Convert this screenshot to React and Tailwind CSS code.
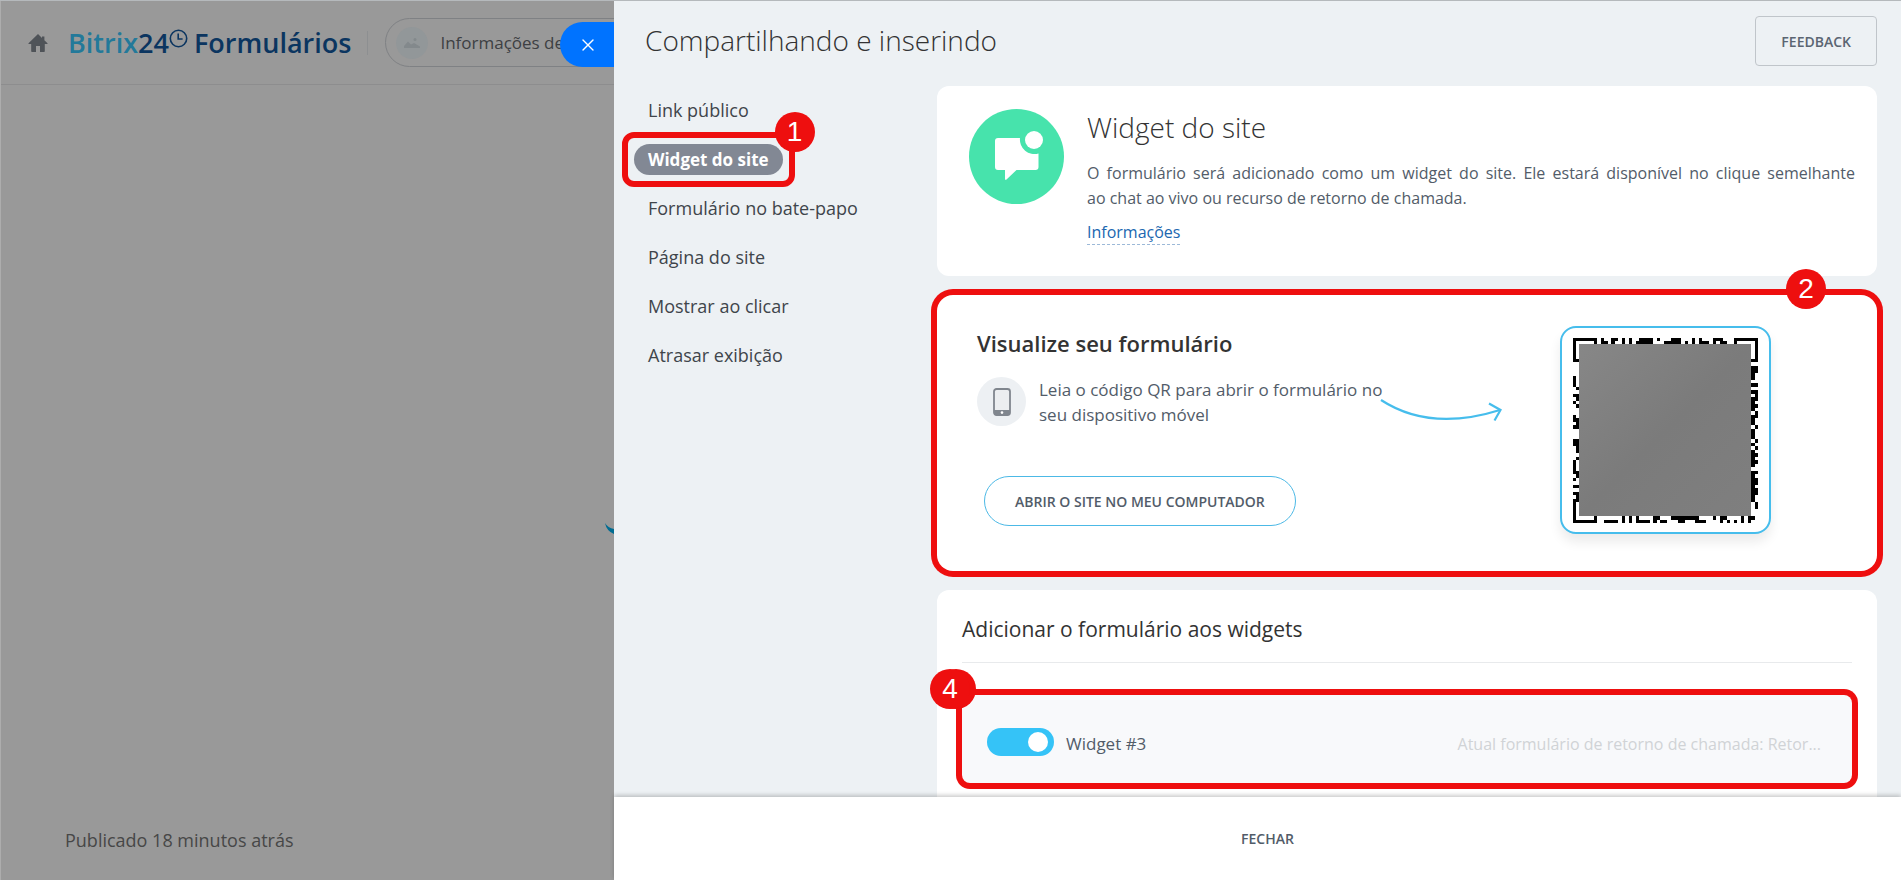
import React, { useState } from 'react';
import { X } from 'lucide-react';

const menuItems = [
  { id: 'link', label: 'Link público' },
  { id: 'widget', label: 'Widget do site', step: '1' },
  { id: 'chat', label: 'Formulário no bate-papo' },
  { id: 'page', label: 'Página do site' },
  { id: 'click', label: 'Mostrar ao clicar' },
  { id: 'delay', label: 'Atrasar exibição' },
];

// Visible edge modules of the 53x53 code, the middle is covered
const qrTop = [
  '11111110100110101001111010001110001010001110001111111',
  '10000010110100101011111000111110101011101011001000001',
];
const qrBottom = [
  '10000010000000101010000110001111111100001011000010110',
  '11111110011110101011110101100011000111000010101010100',
];
const qrLeft = [
  '11111110000111001010001101000110000111101010101111111',
  '10000010000000101101000111000111101000110010111000001',
];
const qrRight = [
  '00000010111101010111101110111010111110111111111000000',
  '11111110110001011101011001000101010100101101100110000',
];

function QrCode() {
  const cells = [];
  const add = (line, place) => {
    line.split('').forEach((bit, i) => {
      if (bit === '1') cells.push(place(i));
    });
  };
  add(qrTop[0], (i) => [i, 0]);
  add(qrTop[1], (i) => [i, 1]);
  add(qrBottom[0], (i) => [i, 51]);
  add(qrBottom[1], (i) => [i, 52]);
  add(qrLeft[0].slice(2, 51), (i) => [0, i + 2]);
  add(qrLeft[1].slice(2, 51), (i) => [1, i + 2]);
  add(qrRight[0].slice(2, 51), (i) => [51, i + 2]);
  add(qrRight[1].slice(2, 51), (i) => [52, i + 2]);

  return (
    <svg viewBox="0 0 53 53" className="w-[185px] h-[185px]" shapeRendering="crispEdges" role="img" aria-label="QR">
      <defs>
        <linearGradient id="qr-cover" x1="0" y1="0" x2="1" y2="1">
          <stop offset="0" stopColor="#878787" />
          <stop offset="0.5" stopColor="#7b7b7b" />
          <stop offset="1" stopColor="#7f7f7f" />
        </linearGradient>
      </defs>
      {cells.map(([x, y]) => (
        <rect key={`${x}-${y}`} x={x} y={y} width="1" height="1" fill="#000" />
      ))}
      <rect x="1.8" y="1.8" width="49.3" height="49.2" fill="url(#qr-cover)" />
    </svg>
  );
}

function StepBadge({ children, className }) {
  return (
    <span
      className={`absolute z-10 flex items-center justify-center w-10 h-10 rounded-full bg-[#ee0f0f] text-white text-[28px] leading-none font-normal font-['Liberation_Sans',sans-serif] ${className}`}
    >
      {children}
    </span>
  );
}

function HomeIcon() {
  return (
    <svg viewBox="0 0 20 20" className="w-5 h-5 shrink-0" fill="#4f5358">
      <path d="M10 1 L0.5 10.2 V11 H3.2 V18.2 Q3.2 19 4 19 H8 V13 H12 V19 H16 Q16.8 19 16.8 18.2 V11 H19.5 V10.2 L16.4 7.2 V3.4 H14 V4.9 Z" />
    </svg>
  );
}

function ClockIcon() {
  return (
    <svg viewBox="0 0 19 19" className="w-[19px] h-[19px] mt-[6px] self-start" fill="none" stroke="#0b3560" strokeWidth="1.6">
      <circle cx="9.5" cy="9.5" r="8.2" />
      <path d="M9.2 4.6 V10 H13.6" />
    </svg>
  );
}

function ChatWidgetIcon() {
  return (
    <svg viewBox="0 0 95 95" className="w-[95px] h-[95px] shrink-0">
      <circle cx="47.5" cy="47.5" r="47.5" fill="#47e3ac" />
      <path
        fill="#fff"
        d="M29 29 H51 A14.5 14.5 0 0 0 69.5 44.5 V58 Q69.5 61 66.5 61 H47.5 L37.5 70.5 Q36 71.6 36 69.5 V61 H29 Q26 61 26 58 V32 Q26 29 29 29 Z"
      />
      <circle cx="65" cy="31" r="9" fill="#fff" />
    </svg>
  );
}

function PhoneIcon() {
  return (
    <span className="flex items-center justify-center w-[49px] h-[49px] rounded-full bg-[#edf0f3] shrink-0">
      <svg viewBox="0 0 18 28" className="w-[18px] h-7">
        <rect x="1" y="1" width="16" height="26" rx="2.5" fill="#eceef0" stroke="#80868e" strokeWidth="1.8" />
        <path d="M1 22 H17 V25 Q17 27 15 27 H3 Q1 27 1 25 Z" fill="#80868e" />
        <circle cx="9" cy="24.6" r="1.3" fill="#fff" />
      </svg>
    </span>
  );
}

function Backdrop() {
  return (
    <div className="relative w-[614px] shrink-0 flex flex-col bg-[#999] overflow-hidden border-l border-[#adadad]">
      <header className="flex items-center h-[84px] pl-[27px] border-b border-[#8d8d8e] shrink-0">
        <HomeIcon />
        <div className="flex items-center ml-5 text-[27px] leading-10 font-semibold text-[#0b3560] whitespace-nowrap">
          <span className="text-[#23799a]">Bitrix</span>
          <span>24</span>
          <ClockIcon />
          <span className="ml-[6px]">Formulários</span>
        </div>
        <div className="w-px h-6 ml-4 bg-[#8d8f91] shrink-0" />
        <div className="flex items-center h-[49px] w-80 ml-[17px] pl-[10px] rounded-full border border-[#7f8184] shrink-0">
          <span className="flex items-center justify-center w-8 h-8 rounded-full bg-[#929799] shrink-0">
            <svg viewBox="0 0 18 12" className="w-[18px] h-3" fill="#83898c">
              <path d="M1 11 V9 L5 4.5 L8 7.5 L11 6 L17 9.5 V11 Z" />
              <circle cx="12" cy="2.5" r="1.5" />
            </svg>
          </span>
          <span className="ml-3 text-[17px] text-[#3d4043] whitespace-nowrap">Informações de contato</span>
        </div>
      </header>
      <button
        type="button"
        aria-label="Fechar painel"
        className="absolute right-0 top-[21px] flex items-center justify-center w-[54px] h-[45px] pl-[2px] rounded-l-full bg-[#0073ff] text-white"
      >
        <X className="w-5 h-5" strokeWidth={1.6} />
      </button>
      <main className="flex-1 flex items-center justify-end pt-[145px]">
        <svg viewBox="0 0 9 12" className="w-[9px] h-3" fill="#006c92">
          <path d="M0 0 Q3 5 9 6 V11 Q1.5 8 0 0 Z" />
        </svg>
      </main>
      <p className="pl-16 pb-7 text-[18px] leading-6 text-[#474747]">Publicado 18 minutos atrás</p>
    </div>
  );
}

function SideMenu({ active, onSelect }) {
  return (
    <nav className="w-[323px] shrink-0 pl-5">
      <ul>
        {menuItems.map((item) => (
          <li key={item.id} className="flex items-center h-[49px]">
            <a
              href={`#${item.id}`}
              onClick={() => onSelect(item.id)}
              className={
                item.id === active
                  ? 'relative flex items-center h-[31px] px-[14px] rounded-full bg-[#828894] text-[17px] font-bold text-white whitespace-nowrap'
                  : 'relative flex items-center h-[31px] px-[14px] text-[18px] text-[#40454b] whitespace-nowrap'
              }
            >
              {item.label}
              {item.step && (
                <>
                  <span className="absolute -inset-3 rounded-xl border-6 border-[#ee0f0f]" />
                  <StepBadge className="-right-8 -top-8">{item.step}</StepBadge>
                </>
              )}
            </a>
          </li>
        ))}
      </ul>
    </nav>
  );
}

function IntroCard() {
  return (
    <section className="flex items-start rounded-xl bg-white pt-[23px] pr-[22px] pb-[31px] pl-8">
      <ChatWidgetIcon />
      <div className="ml-[23px]">
        <h2 className="text-[28px] leading-9 font-light text-[#333]">Widget do site</h2>
        <p className="mt-4 text-[16px] leading-[25px] text-[#525c69] text-justify">
          O formulário será adicionado como um widget do site. Ele estará disponível no clique semelhante
          ao&nbsp;chat&nbsp;ao vivo ou recurso de retorno de chamada.
        </p>
        <a
          href="#info"
          className="inline-block mt-[9px] text-[16px] leading-6 text-[#2067b0] border-b border-dashed border-[#9cb9d8]"
        >
          Informações
        </a>
      </div>
    </section>
  );
}

function PreviewCard() {
  return (
    <section className="relative flex items-start rounded-2xl bg-white ring-6 ring-[#ee0f0f] pl-10 pb-[37px]">
      <StepBadge className="right-[51px] -top-[26px]">2</StepBadge>
      <div className="w-[407px] shrink-0 pt-[34px] pb-2">
        <h3 className="text-[22px] leading-7 font-semibold text-[#333]">Visualize seu formulário</h3>
        <div className="flex items-start gap-[13px] mt-5">
          <PhoneIcon />
          <p className="text-[17px] leading-[25px] text-[#525c69]">
            Leia o código QR para abrir o formulário no seu dispositivo móvel
          </p>
        </div>
        <button
          type="button"
          className="h-[50px] mt-[49px] ml-[7px] px-[30px] rounded-full border border-[#4cb9e6] text-[14px] font-semibold text-[#525c69] whitespace-nowrap"
        >
          ABRIR O SITE NO MEU COMPUTADOR
        </button>
      </div>
      <svg viewBox="0 0 124 26" className="w-[124px] h-[26px] mt-[102px] -ml-1 shrink-0" fill="none" stroke="#46bdec" strokeWidth="2.2">
        <path d="M1 3 Q50 35 120 13" />
        <path d="M109 6.5 L120.5 13 L114.5 23.5" />
      </svg>
      <div className="flex items-center justify-center w-[211px] h-[208px] mt-[31px] ml-[56px] rounded-2xl border-2 border-[#46bdec] bg-white shadow-[0_8px_12px_rgba(0,0,0,0.08)] shrink-0">
        <QrCode />
      </div>
    </section>
  );
}

function WidgetsCard() {
  const [enabled, setEnabled] = useState(true);

  return (
    <section className="rounded-xl bg-white px-[25px] pt-[25px] pb-8 shrink-0">
      <h3 className="pb-[19px] border-b border-[#e8eaec] text-[21px] leading-7 text-[#333]">
        Adicionar o formulário aos widgets
      </h3>
      <div className="relative flex items-center h-[88px] mt-8 pt-[6px] pl-[25px] pr-[31px] rounded-lg bg-[#f8f9fb] ring-6 ring-[#ee0f0f]">
        {/* Second disc peeks out from behind the numbered one */}
        <StepBadge className="-left-[26px] -top-[26px]" />
        <StepBadge className="-left-8 -top-[26px]">4</StepBadge>
        <label className="flex items-end text-[17px] leading-6 text-[#525c69] cursor-pointer">
          <input
            type="checkbox"
            checked={enabled}
            onChange={(e) => setEnabled(e.target.checked)}
            className="peer sr-only"
          />
          <span className="flex items-center w-[67px] h-7 px-[6px] mr-3 rounded-full bg-gray-300 peer-checked:bg-[#35c3f7] peer-checked:justify-end">
            <span className="w-5 h-5 rounded-full bg-white" />
          </span>
          Widget #3
        </label>
        <span className="ml-auto mt-1 text-[16px] leading-6 text-[#d0d3d6] whitespace-nowrap">
          Atual formulário de retorno de chamada: Retor...
        </span>
      </div>
    </section>
  );
}

function App() {
  const [active, setActive] = useState('widget');

  return (
    <div className="flex h-screen overflow-hidden border-t border-[#b5b9bc] font-['Open_Sans','Noto_Sans',sans-serif]">
      <Backdrop />

      {/* Slider panel */}
      <div className="flex-1 min-w-0 flex flex-col bg-[#edf1f4]">
        <header className="flex items-start justify-between pt-[15px] pb-5 pl-[31px] pr-6 shrink-0">
          <h1 className="text-[28px] leading-[48px] font-light text-[#333]">Compartilhando e inserindo</h1>
          <button
            type="button"
            className="h-[50px] px-[25px] rounded border border-[#c0c5ca] text-[14px] font-semibold text-[#5b6572]"
          >
            FEEDBACK
          </button>
        </header>

        <div className="flex-1 min-h-0 flex items-start pr-6 overflow-hidden">
          <SideMenu active={active} onSelect={setActive} />
          <div className="flex-1 min-w-0 flex flex-col gap-[19px]">
            <IntroCard />
            <PreviewCard />
            <WidgetsCard />
          </div>
        </div>

        <footer className="relative z-20 flex items-center justify-center h-[83px] pl-5 bg-white shadow-[0_-2px_4px_rgba(0,0,0,0.2)] shrink-0">
          <button type="button" className="text-[14px] font-semibold text-[#525c69]">
            FECHAR
          </button>
        </footer>
      </div>
    </div>
  );
}

export default App;
